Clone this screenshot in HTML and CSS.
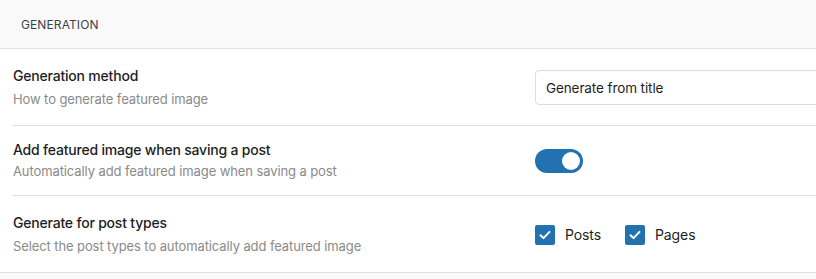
FILE: index.html
```html
<!DOCTYPE html>
<html lang="en">
<head>
    <meta charset="UTF-8">
    <meta name="viewport" content="width=device-width, initial-scale=1.0">
    <title>Generation Settings</title>
    <link rel="stylesheet" href="styles.css">
</head>
<body>
    <div class="settings-panel">
        <div class="panel-header">
            <h2>Generation</h2>
        </div>

        <div class="setting-row">
            <div class="setting-info">
                <div class="setting-title">Generation method</div>
                <div class="setting-desc">How to generate featured image</div>
            </div>
            <div class="setting-control">
                <div class="select-box">Generate from title</div>
            </div>
        </div>

        <div class="setting-row compact">
            <div class="setting-info">
                <div class="setting-title">Add featured image when saving a post</div>
                <div class="setting-desc">Automatically add featured image when saving a post</div>
            </div>
            <div class="setting-control">
                <span class="toggle on"><span class="knob"></span></span>
            </div>
        </div>

        <div class="setting-row">
            <div class="setting-info">
                <div class="setting-title">Generate for post types</div>
                <div class="setting-desc">Select the post types to automatically add featured image</div>
            </div>
            <div class="setting-control">
                <label class="check">
                    <span class="box">
                        <svg viewBox="0 0 20 20" width="20" height="20"><path d="M5.5 10.2l3 2.9 6-6.2" fill="none" stroke="#fff" stroke-width="2" stroke-linecap="round" stroke-linejoin="round"/></svg>
                    </span>
                    Posts
                </label>
                <label class="check">
                    <span class="box">
                        <svg viewBox="0 0 20 20" width="20" height="20"><path d="M5.5 10.2l3 2.9 6-6.2" fill="none" stroke="#fff" stroke-width="2" stroke-linecap="round" stroke-linejoin="round"/></svg>
                    </span>
                    Pages
                </label>
            </div>
        </div>
    </div>
</body>
</html>
```

FILE: styles.css
```css
* {
    margin: 0;
    padding: 0;
    box-sizing: border-box;
}

body {
    font-family: Inter, 'Noto Sans', sans-serif;
    background: #f9f9f9;
    color: #1e1e1e;
    overflow: hidden;
}

.settings-panel {
    background: #fff;
    border-bottom: 1px solid #e0e0e0;
}

.panel-header {
    height: 49px;
    background: #f9f9f9;
    border-bottom: 1px solid #e0e0e0;
    display: flex;
    align-items: center;
    padding-left: 21px;
}

.panel-header h2 {
    font-size: 12px;
    font-weight: 400;
    color: #3c434a;
    text-transform: uppercase;
    letter-spacing: 0.1px;
}

.setting-row {
    display: flex;
    align-items: center;
    margin-left: 13px;
    padding: 17px 0 16px;
    border-bottom: 1px solid #e0e0e0;
}

.setting-row:last-child {
    border-bottom: none;
}

.setting-row.compact {
    padding: 14px 0;
}

.setting-info {
    width: 522px;
    flex-shrink: 0;
}

.setting-title {
    font-size: 14px;
    font-weight: 500;
    line-height: 20px;
    letter-spacing: -0.2px;
}

.setting-desc {
    font-size: 13px;
    line-height: 20px;
    color: #8a8a8a;
    margin-top: 3px;
    letter-spacing: -0.1px;
}

.compact .setting-desc {
    margin-top: 1px;
}

.setting-control {
    display: flex;
    align-items: center;
    gap: 24px;
}

.select-box {
    width: 320px;
    height: 35px;
    border: 1px solid #dcdcde;
    border-radius: 4px;
    padding: 0 10px;
    display: flex;
    align-items: center;
    font-size: 13.5px;
    letter-spacing: -0.1px;
}

.toggle {
    display: inline-block;
    width: 48px;
    height: 24px;
    border-radius: 12px;
    background: #2271b1;
    position: relative;
}

.toggle .knob {
    position: absolute;
    top: 3px;
    right: 3px;
    width: 18px;
    height: 18px;
    border-radius: 50%;
    background: #fff;
}

.check {
    display: flex;
    align-items: center;
    gap: 10px;
    font-size: 14px;
    letter-spacing: -0.1px;
}

.check .box {
    width: 20px;
    height: 20px;
    border-radius: 2px;
    background: #2271b1;
    display: flex;
}
```
